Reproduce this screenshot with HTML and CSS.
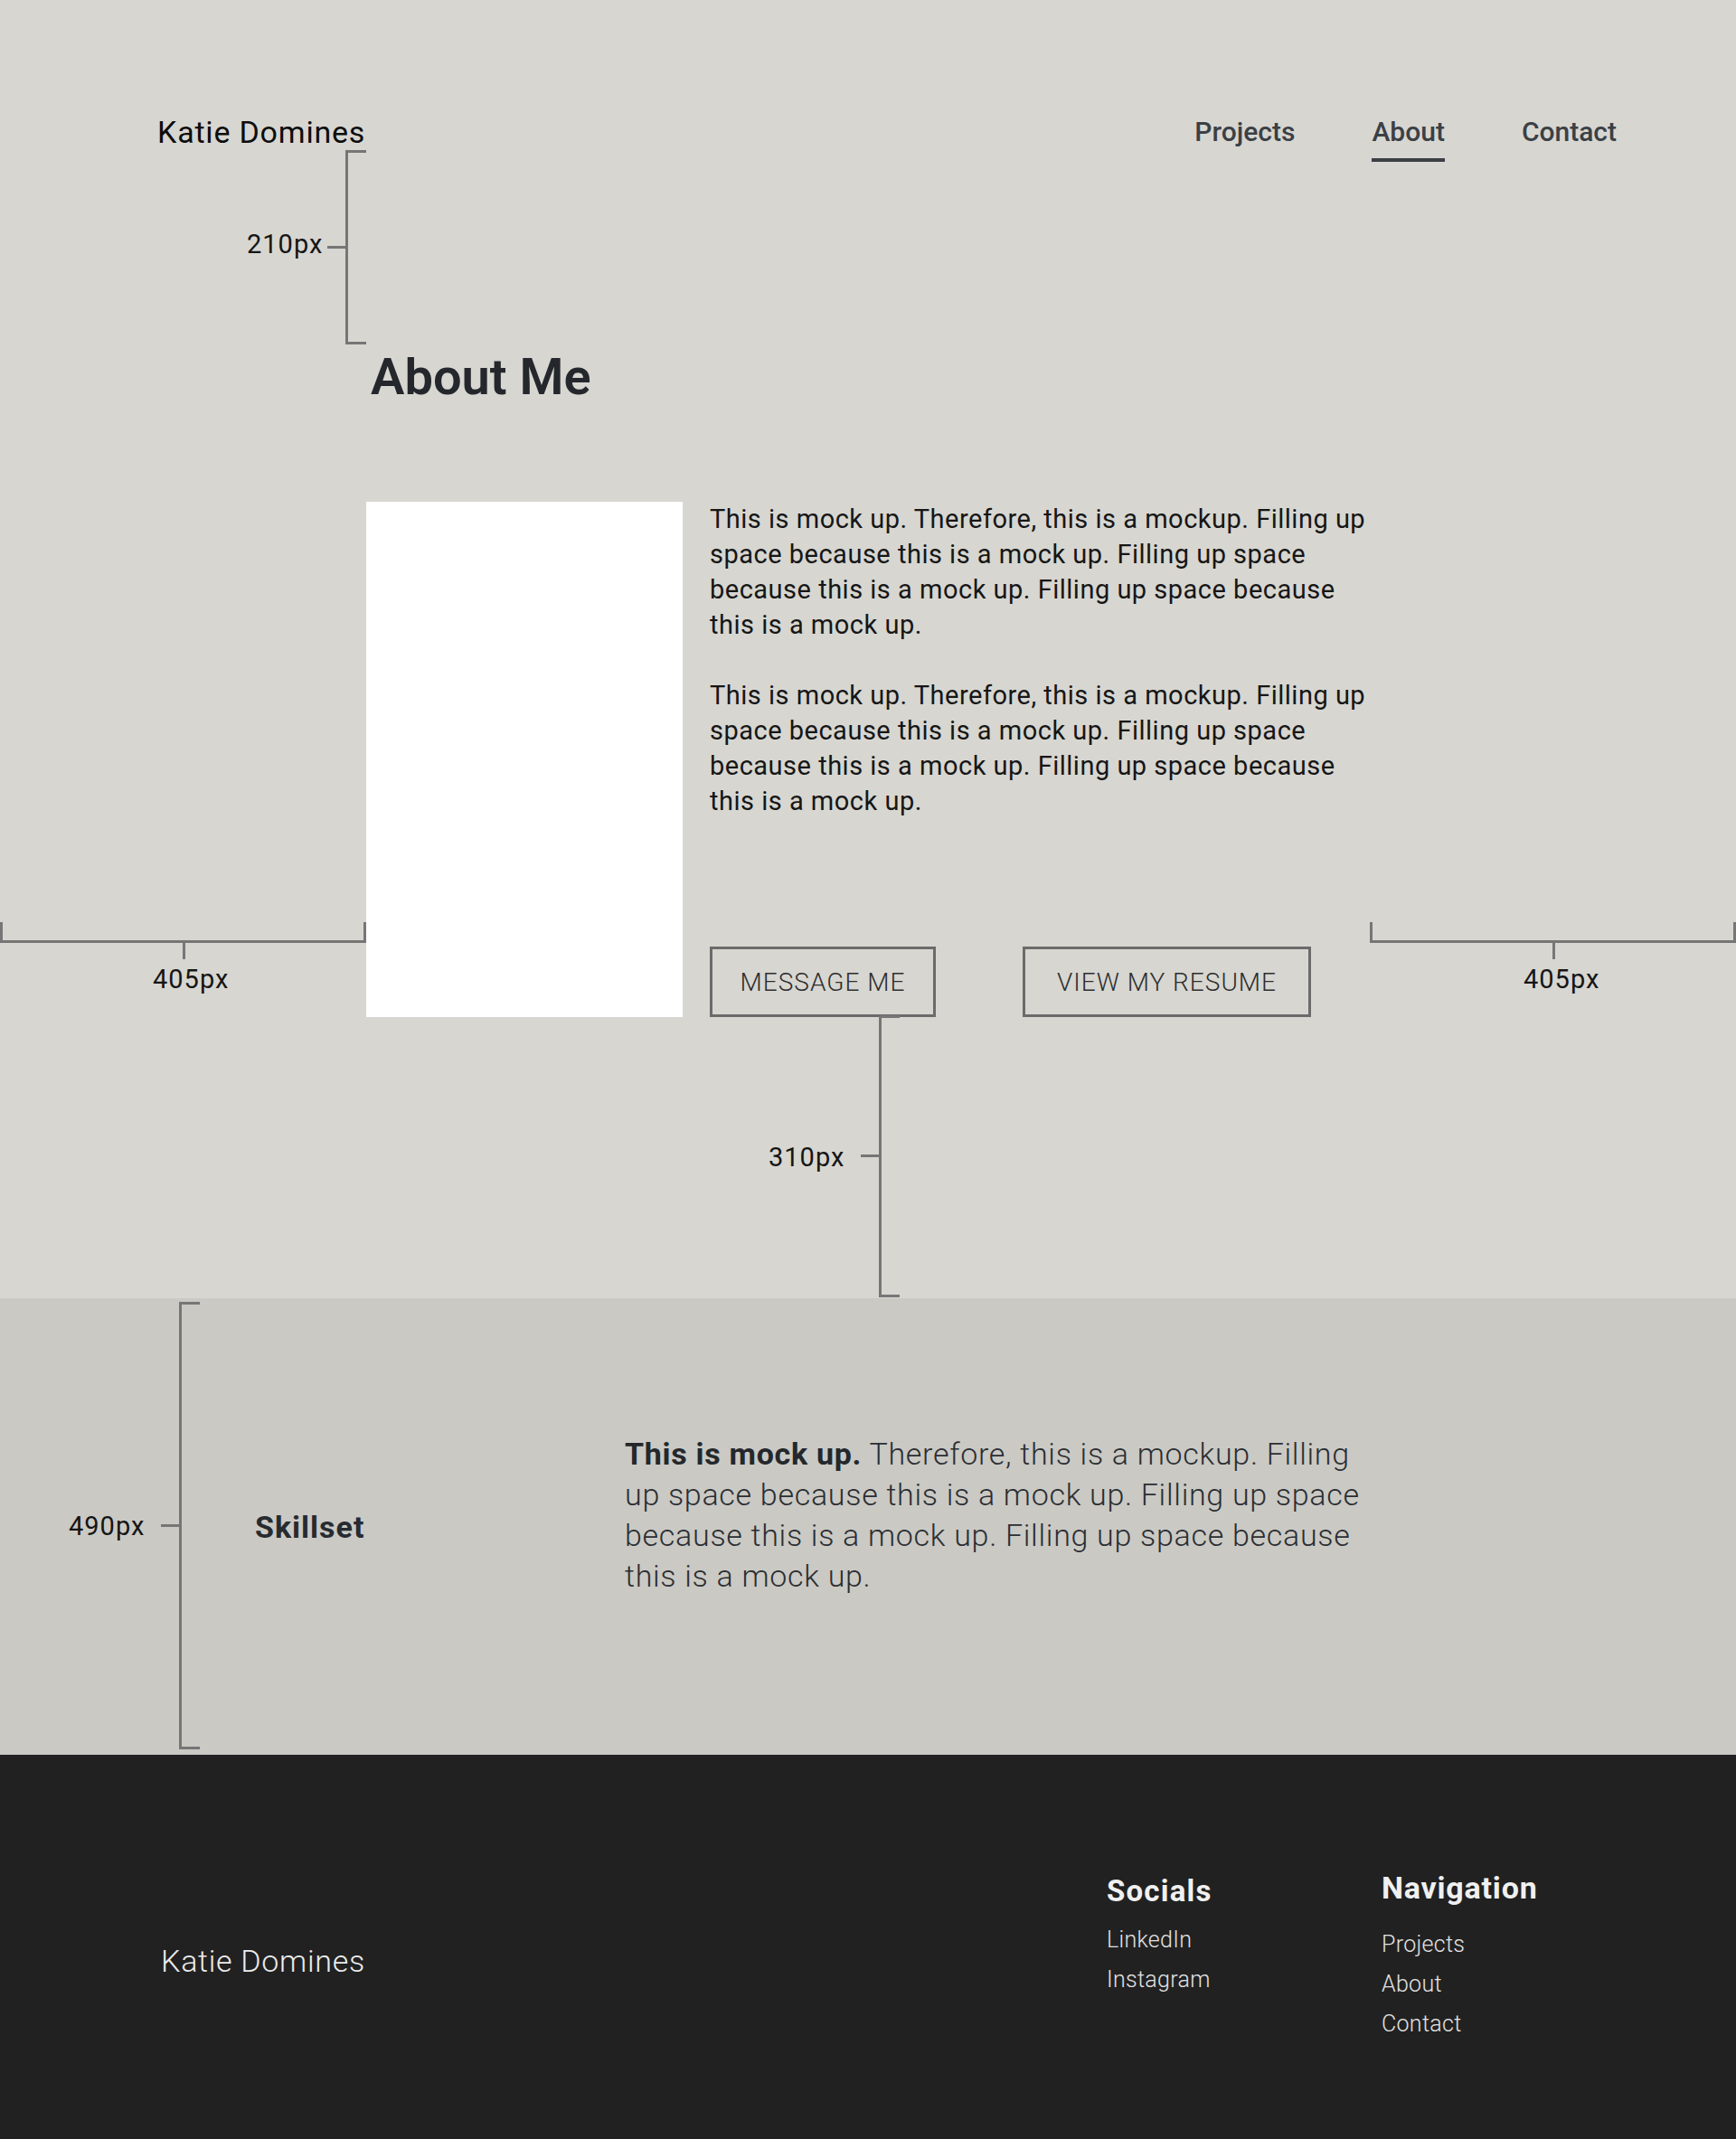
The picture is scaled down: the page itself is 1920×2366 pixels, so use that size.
FILE: index.html
```html
<!DOCTYPE html>
<html lang="en">
<head>
<meta charset="utf-8">
<title>Katie Domines – About</title>
<link rel="stylesheet" href="styles.css">
</head>
<body>
<div class="page">
  <header class="site-header">
    <a class="logo" href="#">Katie Domines</a>
    <nav class="main-nav">
      <a href="#">Projects</a>
      <a href="#" class="active">About</a>
      <a href="#">Contact</a>
    </nav>
  </header>

  <main>
    <section class="about">
      <h1 class="about-title">About Me</h1>
      <div class="about-row">
        <div class="photo"></div>
        <div class="about-body">
          <div class="about-text">
            <p>This is mock up. Therefore, this is a mockup. Filling up space because this is a mock up. Filling up space because this is a mock up. Filling up space because this is a mock up.</p>
            <p>This is mock up. Therefore, this is a mockup. Filling up space because this is a mock up. Filling up space because this is a mock up. Filling up space because this is a mock up.</p>
          </div>
          <div class="about-actions">
            <a class="btn btn-message" href="#">MESSAGE ME</a>
            <a class="btn btn-resume" href="#">VIEW MY RESUME</a>
          </div>
        </div>
      </div>
    </section>

    <section class="skills">
      <h2 class="skills-title">Skillset</h2>
      <p class="skills-text"><strong>This is mock up.</strong> Therefore, this is a mockup. Filling up space because this is a mock up. Filling up space because this is a mock up. Filling up space because this is a mock up.</p>
    </section>
  </main>

  <footer class="site-footer">
    <div class="footer-brand">Katie Domines</div>
    <div class="footer-col footer-socials">
      <h3>Socials</h3>
      <a href="#">LinkedIn</a>
      <a href="#">Instagram</a>
    </div>
    <div class="footer-col footer-nav">
      <h3>Navigation</h3>
      <a href="#">Projects</a>
      <a href="#">About</a>
      <a href="#">Contact</a>
    </div>
  </footer>

  <!-- spacing annotations -->
  <div class="dim dim-v dim-210"></div>
  <span class="dim-label label-210">210px</span>

  <div class="dim dim-h dim-405-left"></div>
  <span class="dim-label label-405-left">405px</span>

  <div class="dim dim-h dim-405-right"></div>
  <span class="dim-label label-405-right">405px</span>

  <div class="dim dim-v dim-310"></div>
  <span class="dim-label label-310">310px</span>

  <div class="dim dim-v dim-490"></div>
  <span class="dim-label label-490">490px</span>
</div>
</body>
</html>
```

FILE: styles.css
```css
html, body {
  margin: 0;
  padding: 0;
}

body {
  background: #d7d6d1;
  font-family: Roboto, "Noto Sans", "Liberation Sans", sans-serif;
  color: #161616;
}

.page {
  position: relative;
  width: 1920px;
}

/* ---------- header ---------- */
.site-header {
  display: flex;
  justify-content: space-between;
  align-items: flex-start;
  padding: 129px 132px 0 174px;
}

.logo {
  font-size: 34px;
  line-height: 1;
  letter-spacing: 0.8px;
  color: #0d0d0d;
  text-decoration: none;
}

.main-nav {
  display: flex;
  gap: 85px;
  margin-top: 2px;
}

.main-nav a {
  position: relative;
  font-size: 30px;
  line-height: 1;
  font-weight: 500;
  color: #3b4045;
  text-decoration: none;
}

.main-nav a.active::after {
  content: "";
  position: absolute;
  left: 0;
  right: 0;
  top: 44px;
  height: 4px;
  background: #3b4045;
}

/* ---------- about ---------- */
.about {
  padding: 226px 0 311px 405px;
}

.about-title {
  margin: 0 0 0 5px;
  font-size: 56px;
  line-height: 1;
  font-weight: 600;
  color: #24282c;
}

.about-row {
  display: flex;
  gap: 30px;
  margin-top: 110px;
}

.photo {
  width: 350px;
  height: 570px;
  background: #ffffff;
  flex: none;
}

.about-body {
  display: flex;
  flex-direction: column;
  justify-content: space-between;
}

.about-text {
  width: 735px;
  font-size: 29px;
  line-height: 39px;
  letter-spacing: 0.5px;
  color: #161616;
}

.about-text p {
  margin: 0 0 39px;
}

.about-text p:last-child {
  margin-bottom: 0;
}

.about-actions {
  display: flex;
  gap: 96px;
}

.btn {
  box-sizing: border-box;
  height: 78px;
  border: 3px solid #6b6b6b;
  display: flex;
  align-items: center;
  justify-content: center;
  font-size: 28px;
  font-weight: 300;
  letter-spacing: 1px;
  color: #2e2e2e;
  text-decoration: none;
}

.btn-message { width: 250px; }
.btn-resume { width: 319px; }

/* ---------- skills ---------- */
.skills {
  box-sizing: border-box;
  height: 505px;
  background: #cac9c4;
  display: flex;
  align-items: center;
  padding-left: 282px;
}

.skills-title {
  width: 409px;
  flex: none;
  margin: 0;
  font-size: 34px;
  line-height: 1;
  letter-spacing: 1px;
  font-weight: 700;
  color: #272b30;
}

.skills-text {
  width: 830px;
  margin: 0 0 26px;
  font-size: 34px;
  line-height: 45px;
  letter-spacing: 0.7px;
  font-weight: 300;
  color: #2b2e32;
}

.skills-text strong {
  font-weight: 700;
  color: #24282c;
}

/* ---------- footer ---------- */
.site-footer {
  box-sizing: border-box;
  height: 425px;
  background: #212121;
  display: grid;
  grid-template-columns: 1046px 304px auto;
  align-items: start;
  padding-left: 178px;
  color: #ececec;
}

.footer-brand {
  margin-top: 211px;
  font-size: 34px;
  line-height: 1;
  letter-spacing: 0.7px;
  font-weight: 300;
  color: #ececec;
}

.footer-col {
  display: flex;
  flex-direction: column;
  align-items: flex-start;
}

.footer-col h3 {
  margin: 0;
  line-height: 1;
  font-weight: 700;
  color: #f0f0f0;
}

.footer-col a {
  font-size: 25px;
  line-height: 44px;
  letter-spacing: 0.3px;
  font-weight: 300;
  color: #e2e2e2;
  text-decoration: none;
}

.footer-socials {
  margin-top: 134px;
}

.footer-socials h3 {
  font-size: 33px;
  letter-spacing: 1.2px;
  margin-bottom: 16px;
}

.footer-nav {
  margin-top: 130px;
}

.footer-nav h3 {
  font-size: 34px;
  letter-spacing: 0.8px;
  margin-bottom: 24px;
}

/* ---------- annotations ---------- */
.dim {
  position: absolute;
  box-sizing: border-box;
  border: 0 solid #767676;
}

.dim-v {
  width: 23px;
  border-width: 3px 0 3px 3px;
}

.dim-v::before {
  content: "";
  position: absolute;
  left: -23px;
  top: calc(50% - 2px);
  width: 20px;
  height: 3px;
  background: #767676;
}

.dim-h {
  height: 23px;
  border-width: 0 3px 3px 3px;
}

.dim-h::after {
  content: "";
  position: absolute;
  left: calc(50% - 1px);
  top: 100%;
  width: 3px;
  height: 21px;
  background: #767676;
}

.dim-210 { left: 382px; top: 166px; height: 215px; }
.dim-405-left { left: 0; top: 1020px; width: 405px; }
.dim-405-right { left: 1515px; top: 1020px; width: 405px; }
.dim-310 { left: 972px; top: 1123px; height: 312px; }
.dim-490 { left: 198px; top: 1440px; height: 495px; }

.dim-label {
  position: absolute;
  font-size: 29px;
  line-height: 1;
  letter-spacing: 1px;
  color: #151515;
  white-space: nowrap;
}

.label-210 { left: 273px; top: 256px; }
.label-405-left { left: 169px; top: 1069px; }
.label-405-right { left: 1685px; top: 1069px; }
.label-310 { left: 850px; top: 1266px; }
.label-490 { left: 76px; top: 1674px; }
```
